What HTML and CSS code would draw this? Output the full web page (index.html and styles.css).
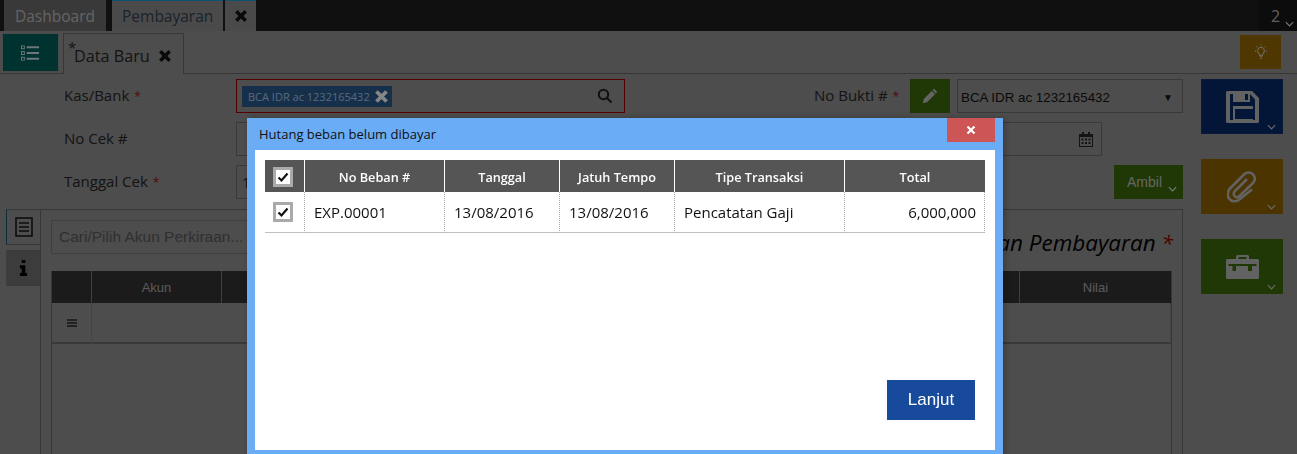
FILE: index.html
```html
<!DOCTYPE html>
<html lang="id">
<head>
<meta charset="utf-8">
<title>Pembayaran</title>
<link rel="stylesheet" href="styles.css">
</head>
<body>
<div class="page">
  <header class="topbar">
    <div class="top-tab top-tab-idle">Dashboard</div>
    <div class="top-tab top-tab-active">Pembayaran</div>
    <div class="top-tab top-tab-close">
      <svg class="ic-x" viewBox="0 0 12 12"><path d="M2 2l8 8M10 2l-8 8"/></svg>
    </div>
    <div class="top-count">2<svg class="chev" viewBox="0 0 10 6"><path d="M1 1l4 4 4-4"/></svg></div>
  </header>

  <div class="subbar">
    <button class="list-btn" type="button">
      <svg viewBox="0 0 20 18" class="ic-list"><path d="M0 1h4v4H0zM1 2v2h2V2zM0 7h4v4H0zM1 8v2h2V8zM0 13h4v4H0zM1 14v2h2v-2zM6 2h13v2H6zM6 8h13v2H6zM6 14h13v2H6z" fill-rule="evenodd"/></svg>
    </button>
    <div class="sub-tab"><sup class="dirty">*</sup>Data Baru
      <svg class="ic-x ic-x-sub" viewBox="0 0 12 12"><path d="M2 2l8 8M10 2l-8 8"/></svg>
    </div>
    <button class="bulb-btn" type="button">
      <svg viewBox="0 0 16 18" class="ic-bulb"><path d="M8 3.500a4 4 0 0 0-2.500 7c.6.600.9 1.200.9 2v.5h3.200v-.5c0-.8.300-1.400.9-2a4 4 0 0 0-2.500-7z"/><path d="M6.400 14.500h3.200M7 16.500h2M8 0v1.500M2.500 2.500l1 1M13.500 2.500l-1 1M1 8h1.500M15 8h-1.500"/></svg>
    </button>
  </div>

  <div class="content">
    <main class="main">
      <div class="form-row">
        <label class="label">Kas/Bank <span class="req">*</span></label>
        <div class="input input-error">
          <span class="chip">BCA IDR ac 1232165432<svg class="ic-x ic-x-chip" viewBox="0 0 12 12"><path d="M2 2l8 8M10 2l-8 8"/></svg></span>
          <svg class="ic-search" viewBox="0 0 16 16"><circle cx="6.500" cy="6.500" r="4.700"/><path d="M10 10l4.500 4.500"/></svg>
        </div>
        <div class="right-group">
          <label class="label-right">No Bukti # <span class="req">*</span></label>
          <button class="pencil-btn" type="button">
            <svg viewBox="0 0 16 16" class="ic-pencil"><path d="M12 .8l3.200 3.200-1.400 1.400-3.200-3.200zM9.800 3l3.200 3.200-8 8L.8 15.200l1-4.200z"/></svg>
          </button>
          <div class="select">BCA IDR ac 1232165432<span class="caret">▼</span></div>
        </div>
      </div>

      <div class="form-row">
        <label class="label">No Cek #</label>
        <div class="input"></div>
        <div class="date-input">
          <svg viewBox="0 0 14 15" class="ic-cal"><path d="M0 2h14v13H0zM1 5v9h12V5z" fill-rule="evenodd"/><path d="M3 0h2v3H3zM9 0h2v3H9zM2.500 6.500h2v2h-2zM6 6.500h2v2H6zM9.500 6.500h2v2h-2zM2.500 10h2v2h-2zM6 10h2v2H6zM9.500 10h2v2h-2z"/></svg>
        </div>
      </div>

      <div class="form-row">
        <label class="label">Tanggal Cek <span class="req">*</span></label>
        <div class="input input-text">13/08/2016</div>
        <button class="ambil-btn" type="button">Ambil<svg class="chev" viewBox="0 0 10 6"><path d="M1 1l4 4 4-4"/></svg></button>
      </div>

      <section class="detail">
        <nav class="side-tabs">
          <div class="side-tab side-tab-active">
            <svg viewBox="0 0 18 20" class="ic-doc"><path d="M1 1h16v18H1z"/><path d="M4 6h10M4 10h10M4 14h10"/></svg>
          </div>
          <div class="side-tab side-tab-info">
            <svg viewBox="0 0 10 18" class="ic-info"><path d="M3 0h4v3.500H3zM1 6h6v8.500h2V18H1v-3.500h2V9.500H1z"/></svg>
          </div>
        </nav>
        <div class="panel">
          <div class="panel-head">
            <input class="search" type="text" placeholder="Cari/Pilih Akun Perkiraan...">
            <h2 class="panel-title">Keterangan Pembayaran <span class="title-req">*</span></h2>
          </div>
          <div class="grid-wrap">
            <table class="grid">
              <thead>
                <tr><th class="g-a"></th><th class="g-b">Akun</th><th class="g-c"></th><th class="g-d">Nilai</th></tr>
              </thead>
              <tbody>
                <tr><td class="g-menu"><svg viewBox="0 0 10 8" class="ic-menu"><path d="M0 0h10v2H0zM0 3h10v2H0zM0 6h10v2H0z"/></svg></td><td></td><td></td><td class="g-end"></td></tr>
              </tbody>
            </table>
          </div>
        </div>
      </section>
    </main>

    <aside class="actions">
      <button class="action action-save" type="button">
        <svg viewBox="0 0 33 32" class="ic-action ic-save"><path fill-rule="evenodd" d="M1.500 0H26l7 7v23.500a1.500 1.500 0 0 1-1.500 1.500h-30A1.500 1.500 0 0 1 0 30.500v-29A1.500 1.500 0 0 1 1.500 0zM4 3v26h25V8.500L24 3z"/><path fill-rule="evenodd" d="M7 1h17v10H7zM19 3v6h3V3zM7 15h20v16H7zM9 18v10h18V18z"/></svg>
        <svg class="chev" viewBox="0 0 10 6"><path d="M1 1l4 4 4-4"/></svg>
      </button>
      <button class="action action-clip" type="button">
        <svg viewBox="0 0 30 32" class="ic-clip"><path d="M25 18.500L13 28C9 31.500 4 30.500 2 27.500 0 24.500.5 20 3 17.500L17 3.500C20 .5 24.500 1 26.500 4 28.500 6.500 28 9.500 26 12L12 25.500C10 27 7.500 26 7 24 6.500 22.500 7 21 8 20L20 8"/></svg>
        <svg class="chev" viewBox="0 0 10 6"><path d="M1 1l4 4 4-4"/></svg>
      </button>
      <button class="action action-case" type="button">
        <svg viewBox="0 0 33 24" class="ic-action ic-case"><path fill-rule="evenodd" d="M10 4V1.500A1.500 1.500 0 0 1 11.500 0h10A1.500 1.500 0 0 1 23 1.500V4h8.500A1.500 1.500 0 0 1 33 5.500v17a1.500 1.500 0 0 1-1.500 1.500h-30A1.500 1.500 0 0 1 0 22.500v-17A1.500 1.500 0 0 1 1.500 4zM12.500 2v2h8V2zM2.500 9v2h4v5h3.500v-5h12v5h4v-5h4.500V9z"/></svg>
        <svg class="chev" viewBox="0 0 10 6"><path d="M1 1l4 4 4-4"/></svg>
      </button>
    </aside>
  </div>
</div>

<div class="overlay"></div>

<div class="modal">
  <div class="modal-head">
    <span class="modal-title">Hutang beban belum dibayar</span>
    <button class="modal-close" type="button">
      <svg class="ic-x ic-x-close" viewBox="0 0 12 12"><path d="M2.500 2.500l7 7M9.500 2.500l-7 7"/></svg>
    </button>
  </div>
  <div class="modal-body">
    <table class="m-table">
      <thead>
        <tr>
          <th class="m-check"><span class="checkbox"><svg viewBox="0 0 12 12"><path d="M1.500 6.500l3 3 6-7"/></svg></span></th>
          <th class="m-no">No Beban #</th>
          <th class="m-date">Tanggal</th>
          <th class="m-date">Jatuh Tempo</th>
          <th class="m-type">Tipe Transaksi</th>
          <th class="m-total">Total</th>
        </tr>
      </thead>
      <tbody>
        <tr>
          <td class="m-check"><span class="checkbox"><svg viewBox="0 0 12 12"><path d="M1.500 6.500l3 3 6-7"/></svg></span></td>
          <td>EXP.00001</td>
          <td>13/08/2016</td>
          <td>13/08/2016</td>
          <td>Pencatatan Gaji</td>
          <td class="num">6,000,000</td>
        </tr>
      </tbody>
    </table>
    <button class="lanjut" type="button">Lanjut</button>
  </div>
</div>
</body>
</html>
```

FILE: styles.css
```css
* { box-sizing: border-box; }
html, body { margin: 0; padding: 0; height: 100%; overflow: hidden; }
body { font-family: "Open Sans", "Noto Sans", sans-serif; font-size: 15px; color: #222; background: #808080; }
button { border: 0; padding: 0; margin: 0; font: inherit; cursor: pointer; }
svg { display: block; }

.page { display: flex; flex-direction: column; height: 100vh; }

/* top bar */
.topbar { flex: none; height: 31px; display: flex; background: #1c1c1c; padding-left: 4px; }
.top-tab { display: flex; align-items: center; height: 31px; }
.top-tab-idle { width: 102px; background: #5f5f5f; color: #a8a8a8; padding-left: 11px; margin-right: 6px; font-size: 15.500px; }
.top-tab-active { width: 111px; background: #7c7c7c; color: #2d3a48; border-top: 1px solid #1488bb; padding-left: 10px; margin-right: 2px; font-size: 15.500px; }
.top-tab-close { width: 31px; background: #7c7c7c; border-top: 1px solid #1488bb; justify-content: center; }
.ic-x { width: 14px; height: 14px; fill: none; stroke: #111; stroke-width: 3; }
.top-count { margin-left: auto; width: 38px; display: flex; background: #141414; color: #a0a0a0; font-size: 16px; padding: 5px 0 0 12px; }
.chev { fill: none; stroke: #c8c8c8; stroke-width: 1.300; width: 9px; height: 6px; }
.top-count .chev { margin: 16px 0 0 5px; }

/* sub bar */
.subbar { flex: none; height: 43px; display: flex; align-items: flex-end; padding-left: 2px; padding-right: 16px; border-bottom: 1px solid #5c5c5c; }
.list-btn { width: 57px; height: 39px; margin-bottom: 1px; background: #005550; border: 1px solid #7c7c7c; display: flex; align-items: center; justify-content: center; }
.ic-list { width: 19px; height: 18px; fill: #b5c8c6; }
.sub-tab { width: 121px; height: 41px; margin: 0 0 -1px 4px; border: 1px solid #5c5c5c; border-bottom: 0; background: #808080; padding: 3px 0 0 10px; display: flex; align-items: center; color: #222; font-size: 16.200px; position: relative; }
.dirty { position: absolute; left: 4px; top: 6px; font-size: 15px; line-height: 1; }
.ic-x-sub { margin-left: 8px; width: 14px; height: 14px; }
.bulb-btn { margin: 0 0 4px auto; width: 41px; height: 34px; background: #835c00; display: flex; align-items: center; justify-content: center; }
.ic-bulb { width: 14px; height: 16px; fill: none; stroke: #b8b098; stroke-width: 1.200; }

/* content */
.content { flex: 1; display: flex; min-height: 0; padding-top: 5px; }
.main { width: 1183px; display: flex; flex-direction: column; }
.form-row { flex: none; height: 34px; margin-bottom: 9px; display: flex; align-items: center; padding-left: 64px; }
.label { width: 172px; font-size: 15px; padding-bottom: 2px; }
.req { color: #8a1010; font-size: 12px; margin-left: 1px; }
.input { width: 389px; height: 34px; border: 1px solid #5f5f5f; display: flex; align-items: center; padding: 0 11px 0 5px; }
.input-error { border-color: #8c0000; }
.input-text { padding-left: 5px; }
.chip { height: 21px; width: 150px; background: #25517f; color: #96b0cc; font-size: 11px; display: flex; align-items: center; padding-left: 6px; white-space: nowrap; }
.ic-x-chip { stroke: #e0e0e0; width: 15px; height: 15px; margin-left: auto; margin-right: 3px; }
.ic-search { margin-left: auto; width: 16px; height: 16px; fill: none; stroke: #1a1a1a; stroke-width: 2; }
.right-group { margin-left: auto; display: flex; align-items: center; }
.label-right { width: 96px; font-size: 15px; padding-bottom: 2px; }
.pencil-btn { width: 40px; height: 34px; background: #355e0b; display: flex; align-items: center; justify-content: center; margin-right: 7px; }
.ic-pencil { width: 16px; height: 16px; fill: #a8a8a8; }
.select { width: 226px; height: 34px; border: 1px solid #5f5f5f; font-family: "Liberation Sans", sans-serif; font-size: 13.330px; color: #111; display: flex; align-items: center; padding: 2px 0 0 3px; }
.caret { margin-left: auto; margin-right: 9px; font-size: 10px; color: #111; }
.date-input { margin-left: auto; margin-right: 81px; width: 120px; height: 34px; border: 1px solid #5f5f5f; display: flex; align-items: center; justify-content: flex-end; padding-right: 8px; }
.ic-cal { width: 14px; height: 15px; fill: #222; }
.ambil-btn { margin-left: auto; width: 69px; height: 34px; background: #355e0b; color: #ababab; font-family: "Liberation Sans", sans-serif; font-size: 14px; display: flex; align-items: center; padding-left: 13px; position: relative; }
.ambil-btn .chev { position: absolute; right: 6px; bottom: 7px; }

/* detail panel */
.detail { flex: 1; min-height: 0; margin-top: 1px; display: flex; padding-left: 6px; }
.side-tabs { width: 34px; flex: none; display: flex; flex-direction: column; }
.side-tab { width: 34px; display: flex; align-items: center; justify-content: center; }
.side-tab-active { height: 36px; border-left: 1px solid #134c66; border-top: 1px solid #5c5c5c; border-bottom: 1px solid #5c5c5c; margin-bottom: 5px; }
.side-tab-info { height: 36px; background: #646464; }
.ic-doc { width: 18px; height: 20px; fill: none; stroke: #111; stroke-width: 1.500; }
.ic-info { width: 9px; height: 18px; fill: #000; }
.panel { flex: 1; min-height: 0; border: 1px solid #5c5c5c; border-bottom: 0; padding: 10px 10px 0 10px; display: flex; flex-direction: column; }
.panel-head { flex: none; height: 51px; display: flex; align-items: flex-start; justify-content: space-between; }
.search { width: 300px; height: 34px; border: 1px solid #6a6a6a; background: transparent; padding: 0 7px; font-family: "Liberation Sans", sans-serif; font-size: 15.500px; color: #333; }
.search::placeholder { color: #505050; opacity: 1; }
.panel-title { margin: 9px -1px 0 0; font-size: 22.500px; font-weight: 400; font-style: italic; color: #000; line-height: 28px; }
.title-req { color: #800000; font-size: 21px; }
.grid-wrap { flex: 1; border: 1px solid #5c5c5c; border-top: 0; border-bottom: 0; }
.grid { width: 1119px; border-collapse: separate; border-spacing: 0; table-layout: fixed; }
.grid th { height: 32px; padding: 1px 0 0; background: #2e2e2e; color: #999; font-family: "Liberation Sans", sans-serif; font-size: 13px; font-weight: 400; border-right: 1px solid #6c6c6c; }
.grid th:last-child { border-right: 0; }
.grid td { height: 41px; border-bottom: 2px solid #5f5f5f; }
.grid td.g-menu { border-right: 1px dotted #5f5f5f; }
.grid td.g-end { border-right: 1px dotted #5f5f5f; }
.g-a { width: 40px; }
.g-b { width: 130px; }
.g-d { width: 151px; }
.ic-menu { width: 10px; height: 8px; margin: 0 auto; fill: #3a3a3a; }

/* action column */
.actions { flex: none; width: 100px; padding-left: 18px; display: flex; flex-direction: column; gap: 25px; }
.action { width: 82px; height: 55px; display: flex; align-items: center; justify-content: center; position: relative; border: 1px solid transparent; }
.action .chev { position: absolute; right: 6px; bottom: 3px; stroke: #b0b0b0; }
.action-save { background: #07255c; border-color: #0e2d62; }
.action-clip { background: #7e5800; }
.action-case { background: #355e0b; }
.ic-action { fill: #a4a4a4; }
.ic-save { width: 33px; height: 32px; }
.ic-clip { fill: none; stroke: #a4a4a4; stroke-width: 2.600; width: 30px; height: 32px; }
.ic-case { width: 33px; height: 24px; }

/* overlay + modal */
.overlay { position: fixed; inset: 0; background: rgba(0, 0, 0, .4); }
.modal { position: absolute; left: 247px; top: 118px; width: 756px; height: 340px; border: 8px solid #6aacf6; border-top: 0; background: #fff; display: flex; flex-direction: column; box-shadow: 2px 0 6px rgba(0, 0, 0, .25); }
.modal-head { flex: none; height: 32px; background: #6aacf6; display: flex; align-items: flex-start; }
.modal-title { font-size: 13px; color: #111; padding: 6px 0 0 4px; line-height: 20px; }
.modal-close { margin-left: auto; width: 48px; height: 24px; background: #cd5555; display: flex; align-items: center; justify-content: center; }
.ic-x-close { stroke: #fff; width: 12px; height: 12px; stroke-width: 2.200; }
.modal-body { flex: 1; min-height: 0; padding: 10px 20px 30px 10px; display: flex; flex-direction: column; }
.m-table { width: 720px; border-collapse: separate; border-spacing: 0; table-layout: fixed; color: #111; }
.m-table th { height: 32px; background: #555; color: #fff; font-size: 12.700px; font-weight: 600; text-align: center; border-right: 1px solid #fff; padding: 1px 0 0; }
.m-table th:last-child { border-right: 0; }
.m-table td { height: 41px; padding: 0 0 1px 9px; font-size: 15px; border-right: 1px dotted #aaa; border-bottom: 1px solid #c0c0c0; }
.m-table td.m-check { padding: 0; }
.m-check { width: 40px; }
.m-no { width: 140px; }
.m-date { width: 115px; }
.m-type { width: 170px; }
.m-total { width: 140px; }
.m-table td.num { text-align: right; padding-right: 8px; }
.checkbox { display: block; width: 20px; height: 20px; margin: 0 auto 0 8px; border: 3px solid #aaa; background: #fff; padding: 1px; }
.checkbox svg { width: 12px; height: 12px; fill: none; stroke: #111; stroke-width: 2.200; }
.lanjut { margin-top: auto; align-self: flex-end; width: 88px; height: 40px; background: #174a9a; color: #fff; font-family: "Liberation Sans", sans-serif; font-size: 17px; font-weight: 400; }
```
